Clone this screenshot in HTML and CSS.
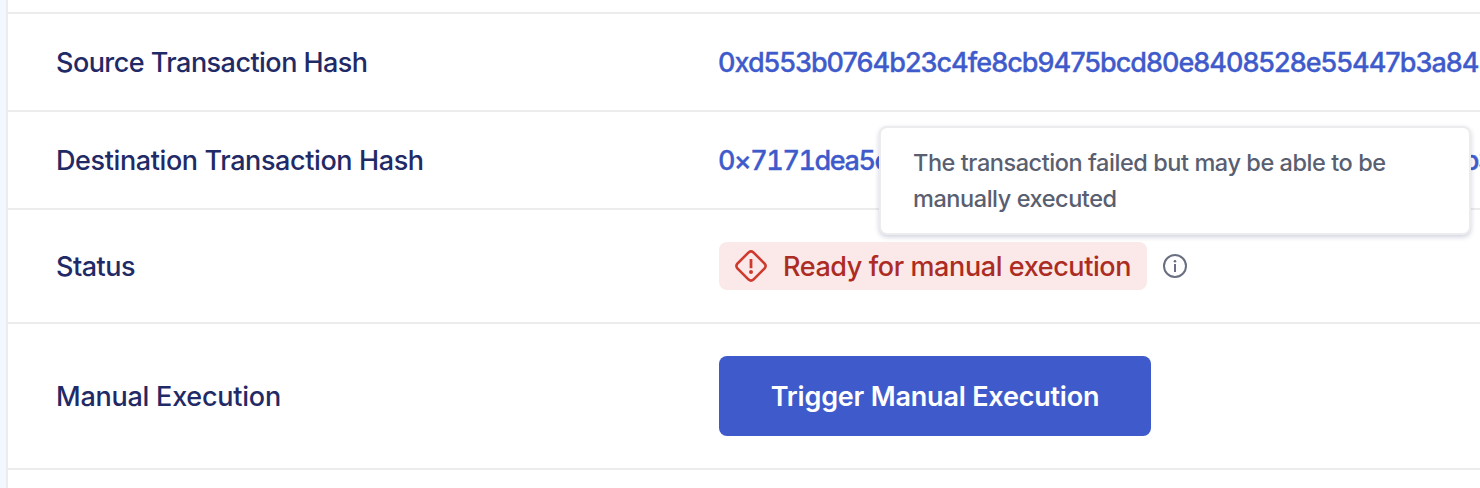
FILE: index.html
```html
<!DOCTYPE html>
<html lang="en">
<head>
<meta charset="utf-8">
<title>Transaction details</title>
<link rel="stylesheet" href="styles.css">
</head>
<body>
<main class="details">
  <div class="row row-cut"></div>
  <div class="row row-hash">
    <div class="label label-source">Source Transaction Hash</div>
    <div class="value"><a class="hash">0xd553b0764b23c4fe8cb9475bcd80e8408528e55447b3a84</a></div>
  </div>
  <div class="row row-hash">
    <div class="label label-dest">Destination Transaction Hash</div>
    <div class="value"><a class="hash hash-dest"><span>0×7171dea5c</span><span>b3</span></a></div>
  </div>
  <div class="row row-status">
    <div class="label label-status">Status</div>
    <div class="value">
      <span class="badge">
        <svg class="badge-icon" viewBox="0 0 32 32" fill="none" stroke="#cf3a2f" stroke-width="2.6"><path d="M13.6 2.4Q16 .4 18.4 2.4L29.6 13.6Q31.6 16 29.6 18.4L18.4 29.6Q16 31.6 13.6 29.6L2.4 18.4Q.4 16 2.4 13.6Z"/><path d="M16 9v9.2" stroke-width="2.8"/><circle cx="16" cy="22" r="2" fill="#cf3a2f" stroke="none"/></svg>
        <span>Ready for manual execution</span>
      </span>
      <svg class="info" viewBox="0 0 24 24" fill="none" stroke="#696f80" stroke-width="2"><circle cx="12" cy="12" r="11"/><path d="M12 10v8"/><circle cx="12" cy="7.3" r="1.3" fill="#696f80" stroke="none"/></svg>
    </div>
  </div>
  <div class="row row-manual">
    <div class="label label-manual">Manual Execution</div>
    <div class="value"><button class="button">Trigger Manual Execution</button></div>
  </div>
</main>
<div class="tooltip">The transaction failed but may be able to be manually executed</div>
</body>
</html>
```
FILE: styles.css
```css
body { margin: 0; height: 488px; overflow: hidden; background: #f3f7ff; font-family: Inter, sans-serif; font-weight: 500; font-size: 27px; }
.details { margin-left: 6px; height: 488px; overflow: hidden; border-left: 2px solid #ececee; background: #fff; color: #1f2a66; }
.row { display: flex; align-items: center; box-sizing: border-box; border-bottom: 2px solid #ececec; padding-left: 48px; white-space: nowrap; }
.row-cut { height: 14px; }
.row-hash { height: 98px; }
.row-status { height: 114px; }
.row-manual { height: 146px; }
.label { flex: 0 0 663px; }
.label-source { letter-spacing: -0.54px; }
.label-dest { letter-spacing: -0.39px; }
.label-status { letter-spacing: -0.5px; }
.label-manual { letter-spacing: -0.24px; }
.value { display: flex; flex: 1; align-items: center; min-width: 0; }
.hash { color: #3f5bcb; letter-spacing: -1px; margin-left: -1px; -webkit-text-stroke: 0.3px #3f5bcb; }
.hash-dest { display: flex; gap: 574px; font-variant-numeric: tabular-nums; letter-spacing: -1.4px; }
.badge { display: flex; align-items: center; gap: 16px; box-sizing: border-box; width: 428px; height: 48px; padding: 0 16px; border-radius: 8px; background: #fae9e8; color: #ac2c24; letter-spacing: -0.41px; }
.badge-icon { flex: none; width: 32px; height: 32px; }
.info { flex: none; width: 24px; height: 24px; margin-left: 16px; }
.button { width: 432px; height: 80px; padding: 0; border: 0; border-radius: 8px; background: #3f5bcb; color: #fff; font: 600 27px Inter, sans-serif; letter-spacing: -0.2px; }
.tooltip { position: absolute; left: 879px; top: 126px; width: 592px; height: 109px; box-sizing: border-box; padding: 17px 32px; border: 2px solid #ececee; border-radius: 8px; background: #fff; box-shadow: 0 2px 5px rgba(35, 45, 100, 0.22); color: #595f70; font-size: 23.5px; line-height: 36px; letter-spacing: -0.44px; }
```
